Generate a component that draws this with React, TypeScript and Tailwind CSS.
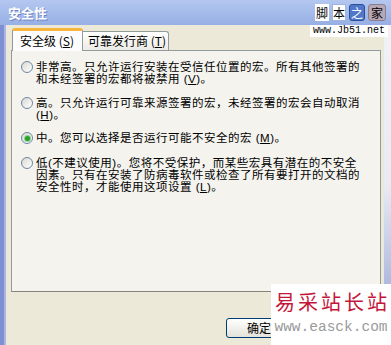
import React from 'react';

const cjk = "font-['Noto_Sans_CJK_SC','Liberation_Sans',sans-serif]";
const tight = "font-['Liberation_Sans','Noto_Sans_CJK_SC',sans-serif]";

interface OptionProps {
  lines: React.ReactNode[];
  checked?: boolean;
  className?: string;
}

const Radio: React.FC<{ checked?: boolean }> = ({ checked }) => (
  <div className="shrink-0 w-[12px] h-[12px] rounded-full border border-[#6f85a8] bg-gradient-to-br from-[#d9d9d2] to-white flex items-center justify-center">
    {checked && <div className="w-[5px] h-[5px] rounded-full bg-[#2aa12a] ring-1 ring-[#8fd18f]" />}
  </div>
);

const Option: React.FC<OptionProps> = ({ lines, checked, className = '' }) => (
  <div className={`flex items-start gap-[3px] ${className}`}>
    <Radio checked={checked} />
    <div className={`flex flex-col text-[11.5px] tracking-[0.5px] leading-[12px] text-black ${tight}`}>
      {lines.map((l, i) => (
        <span key={i} className="whitespace-nowrap">{l}</span>
      ))}
    </div>
  </div>
);

const Key: React.FC<{ k: string }> = ({ k }) => (
  <>(<span className="underline underline-offset-1">{k}</span>)</>
);

const App: React.FC = () => {
  return (
    <div className={`relative w-[391px] h-[345px] overflow-hidden flex flex-col bg-[#ECE9D8] ${cjk}`}>
      {/* title bar */}
      <div className="h-[25px] shrink-0 flex items-center px-2 bg-gradient-to-b from-[#b3c7f0] to-[#97afe4]">
        <span className="text-[13px] text-white font-bold [text-shadow:1px_1px_0_#6d84c4]">安全性</span>
      </div>

      <div className="flex flex-1">
        <div className="w-[6px] flex">
          <div className="w-[4px] bg-[#7f90d2]" />
          <div className="w-[2px] bg-[#a9b6e6]" />
        </div>

        <div className="flex-1 flex flex-col pl-[5px] pr-[3px] pt-[3px]">
          {/* tabs */}
          <div className="h-[22px] flex items-end pl-[1px]">
            <div className="relative z-10 -mb-px h-[23px] w-[71px] flex items-center pl-[7px] bg-[#FCFCFE] border border-[#919B9C] border-b-0 border-t-[3px] border-t-[#F6B73C] rounded-t-[3px] text-[12px] whitespace-nowrap">
              安全级 <Key k="S" />
            </div>
            <div className="h-[19px] w-[86px] flex items-center pl-[5px] bg-gradient-to-b from-white to-[#ECEBE5] border border-[#919B9C] border-b-0 border-l-0 rounded-tr-[3px] text-[12px] whitespace-nowrap">
              可靠发行商&nbsp;<Key k="T" />
            </div>
          </div>

          {/* panel */}
          <div className="h-[242px] border border-[#919B9C] border-b-[#84847c] bg-[#F4F3EE] pt-[10px] pl-[9px] flex flex-col gap-[11.5px]">
            <Option
              lines={[
                '非常高。只允许运行安装在受信任位置的宏。所有其他签署的',
                <>和未经签署的宏都将被禁用 <Key k="V" />。</>,
              ]}
            />
            <Option
              lines={[
                '高。只允许运行可靠来源签署的宏，未经签署的宏会自动取消',
                <><Key k="H" />。</>,
              ]}
            />
            <Option checked lines={[<>中。您可以选择是否运行可能不安全的宏 <Key k="M" />。</>]} />
            <Option
              className="mt-[1px]"
              lines={[
                '低(不建议使用)。您将不受保护，而某些宏具有潜在的不安全',
                '因素。只有在安装了防病毒软件或检查了所有要打开的文档的',
                <>安全性时，才能使用这项设置 <Key k="L" />。</>,
              ]}
            />
          </div>

          {/* buttons */}
          <div className="mt-[26px] flex pl-[215px]">
            <button className="h-[20px] w-[66px] rounded-[3px] border border-[#003C74] bg-gradient-to-b from-white to-[#E3E2DA] text-[12px] leading-none text-black">
              确定
            </button>
          </div>
        </div>

        <div className="w-[7px] bg-gradient-to-b from-[#f1f2f6] via-[#e9ebf2] to-[#8f9cd2]" />
      </div>

      {/* top-right watermark */}
      <div className="absolute top-[4px] right-[3px] w-[78px] flex flex-col items-end">
        <div className="flex gap-[3px] pr-[2px] text-[12px] leading-none">
          <span className="w-[14px] h-[17px] flex items-center justify-center bg-white text-black">脚</span>
          <span className="w-[14px] h-[17px] flex items-center justify-center bg-white text-black border border-[#9fb4e0]">本</span>
          <span className="w-[16px] h-[17px] flex items-center justify-center rounded-[3px] bg-[#4f78c8] text-white border border-[#2d4f96]">之</span>
          <span className="w-[18px] h-[17px] flex items-center justify-center rounded-[3px] bg-[#b7a8b6] text-black border border-[#8a7f8c]">家</span>
        </div>
        <div className="mt-[4px] w-[78px] h-[12px] bg-white font-['Liberation_Mono',monospace] text-[10px] leading-[12px] text-black text-center">
          www.Jb51.net
        </div>
      </div>

      {/* bottom-right watermark */}
      <div className="absolute right-0 bottom-0 w-[120px] h-[61px] bg-white flex flex-col items-center pt-[6px]">
        <div className="text-[20px] leading-[24px] tracking-[3px] text-[#c4163a] pl-[3px]">易采站长站</div>
        <div className="mt-[6px] font-['Liberation_Mono',monospace] text-[14.5px] leading-[14px] text-[#9a9a9a]">www.easck.com</div>
      </div>
    </div>
  );
};

export default App;
